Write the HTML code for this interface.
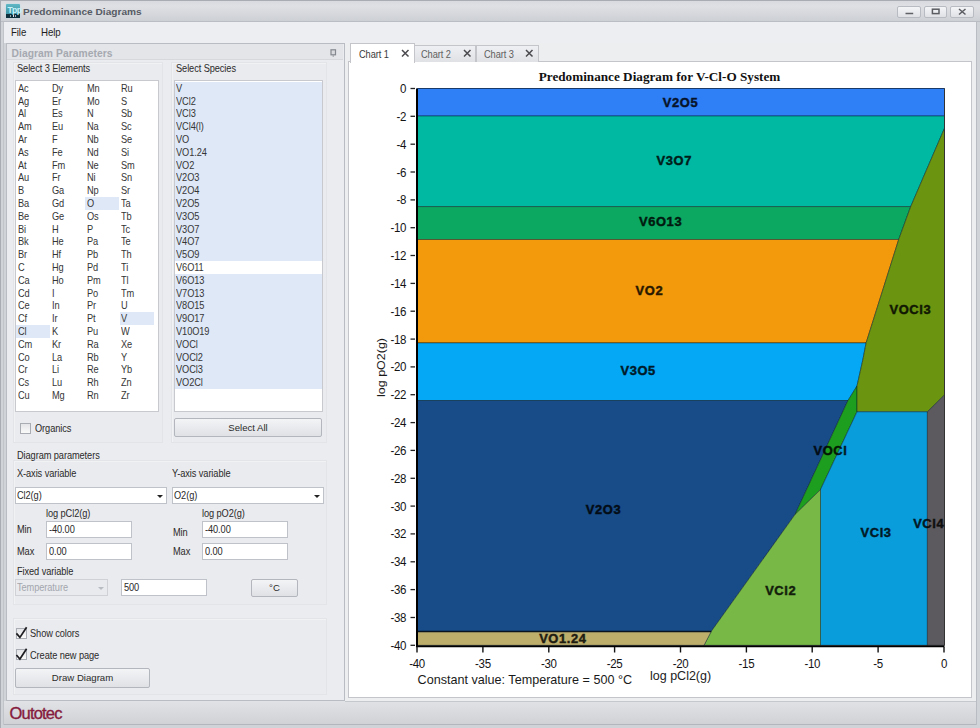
<!DOCTYPE html>
<html><head><meta charset="utf-8">
<style>
*{box-sizing:border-box;margin:0;padding:0}
html,body{width:980px;height:728px;overflow:hidden;background:#e9eaee;font-family:"Liberation Sans",sans-serif;color:#222}
.a{position:absolute}
.t{position:absolute;white-space:nowrap;font-size:10.4px;line-height:12px;color:#2a2a2a;letter-spacing:-0.1px;transform-origin:0 0;transform:scaleX(.89)}
#titlebar{left:0;top:0;width:980px;height:22px;background:linear-gradient(#d9dadf,#dfe0e4 25%,#cdd0d5);border-top:1px solid #a9acb2;border-bottom:1px solid #babdc3}
#menubar{left:3px;top:22px;width:973px;height:21px;background:#eceef1}
.wbtn{position:absolute;top:6px;height:12px;border:1px solid #b9bbc2;border-radius:2px;background:linear-gradient(#f4f5f7,#dfe1e5)}
.panel{left:6px;top:43px;width:339px;height:658px;background:#ebecef;border:1px solid #b9bcc2}
.grp{position:absolute;border:1px solid #e2e4e8;box-shadow:inset 1px 1px 0 #f1f2f4;background:#eaebee}
.lb{position:absolute;background:#fff;border:1px solid #c7c9cf}
.sel{background:#dfe8f7}
.tb{position:absolute;background:#fff;border:1px solid #bfc2c8}
.btn{position:absolute;border:1px solid #b3b6bd;border-radius:2px;background:linear-gradient(#f3f4f6,#dfe1e5);text-align:center;font-size:9.6px;color:#2a2a2a}
.cb{position:absolute;width:11px;height:11px;border:1px solid #a9acb3;background:linear-gradient(#e4e5e8,#fafafa)}
</style></head><body>
<!-- window frame -->
<div class="a" style="left:0;top:0;width:980px;height:728px;background:#d0d3d8"></div>
<div class="a" id="titlebar"></div>
<div class="a" style="left:6px;top:4px;width:14px;height:13.5px;background:linear-gradient(#5fb6c4,#2f8798);border-radius:1px;box-shadow:0 0 1.5px #a8dcea"></div>
<div class="a" style="left:6px;top:13.5px;width:14px;height:4px;background:#0e2f3c"></div>
<div class="t" style="left:7.5px;top:3.5px;font-size:8.5px;color:#c8f2fa;font-weight:bold;letter-spacing:-0.6px;transform:none">Tpp</div>
<div class="a" style="left:10px;top:15px;width:1px;height:1.5px;background:#8aa"></div><div class="a" style="left:12.5px;top:14.5px;width:1.5px;height:2px;background:#dde"></div><div class="a" style="left:15px;top:15px;width:1px;height:1.5px;background:#aab"></div>
<div class="t" style="left:23.3px;top:6.3px;font-weight:bold;font-size:9.6px;color:#565a64;letter-spacing:0;transform:scaleX(1.055)">Predominance Diagrams</div>
<div class="wbtn" style="left:897px;width:24px"></div>
<div class="wbtn" style="left:924px;width:23px"></div>
<div class="wbtn" style="left:950px;width:24px"></div>
<svg class="a" style="left:880px;top:0" width="100" height="22" viewBox="880 0 100 22"><path d="M905.5 13.5 H913.2" stroke="#5f6167" stroke-width="1.5"/><rect x="932.4" y="9.2" width="6.6" height="4.4" fill="none" stroke="#5a5c62" stroke-width="1.5"/><path d="M959 9 L965.5 14.5 M965.5 9 L959 14.5" stroke="#5a5c62" stroke-width="1.5"/></svg>

<div class="a" id="menubar"></div>
<div class="t" style="left:11px;top:27px;font-size:10.2px;transform:scaleX(.95);color:#1e1e1e">File</div>
<div class="t" style="left:41px;top:27px;font-size:10.2px;transform:scaleX(.95);color:#1e1e1e">Help</div>

<!-- left panel -->
<div class="a panel"></div>
<div class="a" style="left:7px;top:44px;width:336px;height:16px;background:#e3e5e9;border-bottom:1px solid #d6d8dc"></div>
<div class="t" style="left:11.5px;top:47.5px;font-weight:bold;color:#a6a9b0;font-size:10.3px;letter-spacing:0.05px;transform:none">Diagram Parameters</div>
<svg class="a" style="left:329px;top:48px" width="10" height="10" viewBox="0 0 10 10"><rect x="2" y="1.8" width="4.5" height="5" fill="#d8dadd" stroke="#85888f" stroke-width="1.2"/><path d="M4.2 7 V9" stroke="#9a9da3" stroke-width="1"/></svg>

<div class="grp" style="left:13px;top:62px;width:150px;height:381px"></div>
<div class="grp" style="left:171px;top:62px;width:156px;height:381px"></div>
<div class="t" style="left:17px;top:63px">Select 3 Elements</div>
<div class="t" style="left:176px;top:63px">Select Species</div>

<div class="lb" style="left:15px;top:80px;width:144px;height:332px"></div>
<div class="lb" style="left:174px;top:80px;width:149px;height:332px"></div>

<div class="a sel" style="left:16.0px;top:325.0px;width:34px;height:12.8px"></div>
<div class="a sel" style="left:85.2px;top:197.0px;width:34px;height:12.8px"></div>
<div class="a sel" style="left:119.8px;top:312.2px;width:34px;height:12.8px"></div>
<div class="t" style="left:17.5px;top:82.7px;color:#363636">Ac</div>
<div class="t" style="left:17.5px;top:95.5px;color:#363636">Ag</div>
<div class="t" style="left:17.5px;top:108.3px;color:#363636">Al</div>
<div class="t" style="left:17.5px;top:121.1px;color:#363636">Am</div>
<div class="t" style="left:17.5px;top:133.9px;color:#363636">Ar</div>
<div class="t" style="left:17.5px;top:146.7px;color:#363636">As</div>
<div class="t" style="left:17.5px;top:159.5px;color:#363636">At</div>
<div class="t" style="left:17.5px;top:172.3px;color:#363636">Au</div>
<div class="t" style="left:17.5px;top:185.1px;color:#363636">B</div>
<div class="t" style="left:17.5px;top:197.9px;color:#363636">Ba</div>
<div class="t" style="left:17.5px;top:210.7px;color:#363636">Be</div>
<div class="t" style="left:17.5px;top:223.5px;color:#363636">Bi</div>
<div class="t" style="left:17.5px;top:236.3px;color:#363636">Bk</div>
<div class="t" style="left:17.5px;top:249.1px;color:#363636">Br</div>
<div class="t" style="left:17.5px;top:261.9px;color:#363636">C</div>
<div class="t" style="left:17.5px;top:274.7px;color:#363636">Ca</div>
<div class="t" style="left:17.5px;top:287.5px;color:#363636">Cd</div>
<div class="t" style="left:17.5px;top:300.3px;color:#363636">Ce</div>
<div class="t" style="left:17.5px;top:313.1px;color:#363636">Cf</div>
<div class="t" style="left:17.5px;top:325.9px;color:#363636">Cl</div>
<div class="t" style="left:17.5px;top:338.7px;color:#363636">Cm</div>
<div class="t" style="left:17.5px;top:351.5px;color:#363636">Co</div>
<div class="t" style="left:17.5px;top:364.3px;color:#363636">Cr</div>
<div class="t" style="left:17.5px;top:377.1px;color:#363636">Cs</div>
<div class="t" style="left:17.5px;top:389.9px;color:#363636">Cu</div>
<div class="t" style="left:52.1px;top:82.7px;color:#363636">Dy</div>
<div class="t" style="left:52.1px;top:95.5px;color:#363636">Er</div>
<div class="t" style="left:52.1px;top:108.3px;color:#363636">Es</div>
<div class="t" style="left:52.1px;top:121.1px;color:#363636">Eu</div>
<div class="t" style="left:52.1px;top:133.9px;color:#363636">F</div>
<div class="t" style="left:52.1px;top:146.7px;color:#363636">Fe</div>
<div class="t" style="left:52.1px;top:159.5px;color:#363636">Fm</div>
<div class="t" style="left:52.1px;top:172.3px;color:#363636">Fr</div>
<div class="t" style="left:52.1px;top:185.1px;color:#363636">Ga</div>
<div class="t" style="left:52.1px;top:197.9px;color:#363636">Gd</div>
<div class="t" style="left:52.1px;top:210.7px;color:#363636">Ge</div>
<div class="t" style="left:52.1px;top:223.5px;color:#363636">H</div>
<div class="t" style="left:52.1px;top:236.3px;color:#363636">He</div>
<div class="t" style="left:52.1px;top:249.1px;color:#363636">Hf</div>
<div class="t" style="left:52.1px;top:261.9px;color:#363636">Hg</div>
<div class="t" style="left:52.1px;top:274.7px;color:#363636">Ho</div>
<div class="t" style="left:52.1px;top:287.5px;color:#363636">I</div>
<div class="t" style="left:52.1px;top:300.3px;color:#363636">In</div>
<div class="t" style="left:52.1px;top:313.1px;color:#363636">Ir</div>
<div class="t" style="left:52.1px;top:325.9px;color:#363636">K</div>
<div class="t" style="left:52.1px;top:338.7px;color:#363636">Kr</div>
<div class="t" style="left:52.1px;top:351.5px;color:#363636">La</div>
<div class="t" style="left:52.1px;top:364.3px;color:#363636">Li</div>
<div class="t" style="left:52.1px;top:377.1px;color:#363636">Lu</div>
<div class="t" style="left:52.1px;top:389.9px;color:#363636">Mg</div>
<div class="t" style="left:86.7px;top:82.7px;color:#363636">Mn</div>
<div class="t" style="left:86.7px;top:95.5px;color:#363636">Mo</div>
<div class="t" style="left:86.7px;top:108.3px;color:#363636">N</div>
<div class="t" style="left:86.7px;top:121.1px;color:#363636">Na</div>
<div class="t" style="left:86.7px;top:133.9px;color:#363636">Nb</div>
<div class="t" style="left:86.7px;top:146.7px;color:#363636">Nd</div>
<div class="t" style="left:86.7px;top:159.5px;color:#363636">Ne</div>
<div class="t" style="left:86.7px;top:172.3px;color:#363636">Ni</div>
<div class="t" style="left:86.7px;top:185.1px;color:#363636">Np</div>
<div class="t" style="left:86.7px;top:197.9px;color:#363636">O</div>
<div class="t" style="left:86.7px;top:210.7px;color:#363636">Os</div>
<div class="t" style="left:86.7px;top:223.5px;color:#363636">P</div>
<div class="t" style="left:86.7px;top:236.3px;color:#363636">Pa</div>
<div class="t" style="left:86.7px;top:249.1px;color:#363636">Pb</div>
<div class="t" style="left:86.7px;top:261.9px;color:#363636">Pd</div>
<div class="t" style="left:86.7px;top:274.7px;color:#363636">Pm</div>
<div class="t" style="left:86.7px;top:287.5px;color:#363636">Po</div>
<div class="t" style="left:86.7px;top:300.3px;color:#363636">Pr</div>
<div class="t" style="left:86.7px;top:313.1px;color:#363636">Pt</div>
<div class="t" style="left:86.7px;top:325.9px;color:#363636">Pu</div>
<div class="t" style="left:86.7px;top:338.7px;color:#363636">Ra</div>
<div class="t" style="left:86.7px;top:351.5px;color:#363636">Rb</div>
<div class="t" style="left:86.7px;top:364.3px;color:#363636">Re</div>
<div class="t" style="left:86.7px;top:377.1px;color:#363636">Rh</div>
<div class="t" style="left:86.7px;top:389.9px;color:#363636">Rn</div>
<div class="t" style="left:121.3px;top:82.7px;color:#363636">Ru</div>
<div class="t" style="left:121.3px;top:95.5px;color:#363636">S</div>
<div class="t" style="left:121.3px;top:108.3px;color:#363636">Sb</div>
<div class="t" style="left:121.3px;top:121.1px;color:#363636">Sc</div>
<div class="t" style="left:121.3px;top:133.9px;color:#363636">Se</div>
<div class="t" style="left:121.3px;top:146.7px;color:#363636">Si</div>
<div class="t" style="left:121.3px;top:159.5px;color:#363636">Sm</div>
<div class="t" style="left:121.3px;top:172.3px;color:#363636">Sn</div>
<div class="t" style="left:121.3px;top:185.1px;color:#363636">Sr</div>
<div class="t" style="left:121.3px;top:197.9px;color:#363636">Ta</div>
<div class="t" style="left:121.3px;top:210.7px;color:#363636">Tb</div>
<div class="t" style="left:121.3px;top:223.5px;color:#363636">Tc</div>
<div class="t" style="left:121.3px;top:236.3px;color:#363636">Te</div>
<div class="t" style="left:121.3px;top:249.1px;color:#363636">Th</div>
<div class="t" style="left:121.3px;top:261.9px;color:#363636">Ti</div>
<div class="t" style="left:121.3px;top:274.7px;color:#363636">Tl</div>
<div class="t" style="left:121.3px;top:287.5px;color:#363636">Tm</div>
<div class="t" style="left:121.3px;top:300.3px;color:#363636">U</div>
<div class="t" style="left:121.3px;top:313.1px;color:#363636">V</div>
<div class="t" style="left:121.3px;top:325.9px;color:#363636">W</div>
<div class="t" style="left:121.3px;top:338.7px;color:#363636">Xe</div>
<div class="t" style="left:121.3px;top:351.5px;color:#363636">Y</div>
<div class="t" style="left:121.3px;top:364.3px;color:#363636">Yb</div>
<div class="t" style="left:121.3px;top:377.1px;color:#363636">Zn</div>
<div class="t" style="left:121.3px;top:389.9px;color:#363636">Zr</div>
<div class="a sel" style="left:175px;top:81.8px;width:147px;height:179.2px"></div>
<div class="a sel" style="left:175px;top:273.8px;width:147px;height:115.2px"></div>
<div class="t" style="left:176px;top:82.7px;color:#363636">V</div>
<div class="t" style="left:176px;top:95.5px;color:#363636">VCl2</div>
<div class="t" style="left:176px;top:108.3px;color:#363636">VCl3</div>
<div class="t" style="left:176px;top:121.1px;color:#363636">VCl4(l)</div>
<div class="t" style="left:176px;top:133.9px;color:#363636">VO</div>
<div class="t" style="left:176px;top:146.7px;color:#363636">VO1.24</div>
<div class="t" style="left:176px;top:159.5px;color:#363636">VO2</div>
<div class="t" style="left:176px;top:172.3px;color:#363636">V2O3</div>
<div class="t" style="left:176px;top:185.1px;color:#363636">V2O4</div>
<div class="t" style="left:176px;top:197.9px;color:#363636">V2O5</div>
<div class="t" style="left:176px;top:210.7px;color:#363636">V3O5</div>
<div class="t" style="left:176px;top:223.5px;color:#363636">V3O7</div>
<div class="t" style="left:176px;top:236.3px;color:#363636">V4O7</div>
<div class="t" style="left:176px;top:249.1px;color:#363636">V5O9</div>
<div class="t" style="left:176px;top:261.9px;color:#363636">V6O11</div>
<div class="t" style="left:176px;top:274.7px;color:#363636">V6O13</div>
<div class="t" style="left:176px;top:287.5px;color:#363636">V7O13</div>
<div class="t" style="left:176px;top:300.3px;color:#363636">V8O15</div>
<div class="t" style="left:176px;top:313.1px;color:#363636">V9O17</div>
<div class="t" style="left:176px;top:325.9px;color:#363636">V10O19</div>
<div class="t" style="left:176px;top:338.7px;color:#363636">VOCl</div>
<div class="t" style="left:176px;top:351.5px;color:#363636">VOCl2</div>
<div class="t" style="left:176px;top:364.3px;color:#363636">VOCl3</div>
<div class="t" style="left:176px;top:377.1px;color:#363636">VO2Cl</div>

<div class="cb" style="left:20px;top:423px"></div>
<div class="t" style="left:35px;top:423px">Organics</div>
<div class="btn" style="left:174px;top:418px;width:148px;height:19px;line-height:17px">Select All</div>

<!-- diagram params -->
<div class="grp" style="left:13px;top:460px;width:314px;height:145px"></div>
<div class="t" style="left:17px;top:450px">Diagram parameters</div>
<div class="t" style="left:17px;top:468px">X-axis variable</div>
<div class="t" style="left:172px;top:468px">Y-axis variable</div>
<div class="tb" style="left:15px;top:487px;width:152px;height:17px"></div>
<div class="t" style="left:17px;top:490px">Cl2(g)</div>
<div class="a" style="left:157px;top:495px;width:0;height:0;border-left:3px solid transparent;border-right:3px solid transparent;border-top:3px solid #222"></div>
<div class="tb" style="left:172px;top:487px;width:152px;height:17px"></div>
<div class="t" style="left:174px;top:490px">O2(g)</div>
<div class="a" style="left:314px;top:495px;width:0;height:0;border-left:3px solid transparent;border-right:3px solid transparent;border-top:3px solid #222"></div>

<div class="t" style="left:46px;top:508px">log pCl2(g)</div>
<div class="t" style="left:202px;top:508px">log pO2(g)</div>
<div class="t" style="left:17px;top:524px">Min</div>
<div class="t" style="left:17px;top:546px">Max</div>
<div class="t" style="left:173px;top:527px">Min</div>
<div class="t" style="left:173px;top:546px">Max</div>
<div class="tb" style="left:46px;top:521px;width:86px;height:17px"></div>
<div class="t" style="left:49px;top:524px">-40.00</div>
<div class="tb" style="left:46px;top:543px;width:86px;height:17px"></div>
<div class="t" style="left:49px;top:546px">0.00</div>
<div class="tb" style="left:202px;top:521px;width:86px;height:17px"></div>
<div class="t" style="left:205px;top:524px">-40.00</div>
<div class="tb" style="left:202px;top:543px;width:86px;height:17px"></div>
<div class="t" style="left:205px;top:546px">0.00</div>

<div class="t" style="left:17px;top:566px">Fixed variable</div>
<div class="a" style="left:15px;top:579px;width:93px;height:17px;border:1px solid #cfd1d6;background:#e9eaee"></div>
<div class="t" style="left:17px;top:582px;color:#a3a6ad">Temperature</div>
<div class="a" style="left:98px;top:587px;width:0;height:0;border-left:3px solid transparent;border-right:3px solid transparent;border-top:3px solid #b8bbc1"></div>
<div class="tb" style="left:121px;top:579px;width:86px;height:17px"></div>
<div class="t" style="left:124px;top:582px">500</div>
<div class="btn" style="left:251px;top:579px;width:47px;height:18px;line-height:16px">°C</div>

<div class="grp" style="left:13px;top:618px;width:314px;height:77px"></div>
<div class="cb" style="left:15.5px;top:627.5px"></div>
<div class="t" style="left:29.5px;top:628px">Show colors</div>
<div class="cb" style="left:15.5px;top:649px"></div>
<div class="t" style="left:29.5px;top:650px">Create new page</div>
<svg class="a" style="left:0;top:0" width="40" height="700" viewBox="0 0 40 700"><path d="M16.4 633.4 L19.9 637.4 L26.6 627.2" fill="none" stroke="#1e1e22" stroke-width="1.7" stroke-linejoin="miter"/><path d="M16.4 655 L19.9 659 L26.6 648.8" fill="none" stroke="#1e1e22" stroke-width="1.7"/></svg>
<div class="btn" style="left:15px;top:668px;width:135px;height:20px;line-height:18px">Draw Diagram</div>

<!-- status bar -->
<div class="a" style="left:3px;top:701px;width:974px;height:24px;background:linear-gradient(#e0e2e5,#d0d2d6);border-bottom:1px solid #b3b6bc"></div>
<div class="a" style="left:976px;top:22px;width:1px;height:703px;background:#b9bcc2"></div>
<div class="a" style="left:0;top:0;width:1px;height:728px;background:#a9acb3"></div><div class="a" style="left:3px;top:22px;width:1px;height:703px;background:#c1c4c9"></div>
<div class="t" style="left:9.5px;top:704px;font-size:16.5px;line-height:18px;color:#851a3c;letter-spacing:-0.8px;transform:none;-webkit-text-stroke:0.35px #851a3c">Outotec</div>

<!-- chart area -->
<div class="a" style="left:345px;top:43px;width:631px;height:658px;background:#eceef0"></div>
<div class="a" style="left:345px;top:701px;width:631px;height:1px;background:#c5c8cd"></div>
<div class="a" style="left:348px;top:61px;width:624px;height:637px;background:#fff;border:1px solid #c3c5cb"></div>
<div class="a" style="left:414px;top:45px;width:62px;height:17px;background:linear-gradient(#eff0f3,#dfe1e5);border:1px solid #c3c5cb;border-bottom:none"></div>
<div class="a" style="left:476px;top:45px;width:63px;height:17px;background:linear-gradient(#eff0f3,#dfe1e5);border:1px solid #c3c5cb;border-bottom:none"></div>
<div class="a" style="left:350px;top:43px;width:65px;height:20px;background:#fff;border:1px solid #c3c5cb;border-bottom:none"></div>
<div class="t" style="left:358.5px;top:49px;color:#3a3a3a">Chart 1</div>
<svg class="a" style="left:401px;top:49px" width="9" height="9" viewBox="0 0 9 9"><path d="M1 1 L7.5 7.5 M7.5 1 L1 7.5" stroke="#4a4a4e" stroke-width="1.5"/></svg>
<div class="t" style="left:421px;top:49px;color:#606060">Chart 2</div>
<svg class="a" style="left:463px;top:49px" width="9" height="9" viewBox="0 0 9 9"><path d="M1 1 L7.5 7.5 M7.5 1 L1 7.5" stroke="#4a4a4e" stroke-width="1.5"/></svg>
<div class="t" style="left:483.5px;top:49px;color:#606060">Chart 3</div>
<svg class="a" style="left:525px;top:49px" width="9" height="9" viewBox="0 0 9 9"><path d="M1 1 L7.5 7.5 M7.5 1 L1 7.5" stroke="#4a4a4e" stroke-width="1.5"/></svg>
<svg class="a" style="left:0;top:0" width="980" height="728" viewBox="0 0 980 728">
<text x="659.5" y="80.7" text-anchor="middle" font-family="Liberation Serif" font-weight="bold" font-size="13.2" fill="#111">Predominance Diagram for V-Cl-O System</text>
<polygon points="417.0,88.5 944.5,88.5 944.5,116.0 417.0,116.0" fill="#2f7ff7" stroke="rgba(0,25,35,0.45)" stroke-width="1"/>
<polygon points="417.0,116.0 944.5,116.0 944.5,128.2 910.7,206.6 417.0,206.6" fill="#00b9a3" stroke="rgba(0,25,35,0.45)" stroke-width="1"/>
<polygon points="417.0,206.6 910.7,206.6 898.7,239.5 417.0,239.5" fill="#0ca862" stroke="rgba(0,25,35,0.45)" stroke-width="1"/>
<polygon points="417.0,239.5 898.7,239.5 866.1,342.9 417.0,342.9" fill="#f39a0c" stroke="rgba(0,25,35,0.45)" stroke-width="1"/>
<polygon points="417.0,342.9 866.1,342.9 862.8,360.0 857.0,386.0 848.0,400.5 417.0,400.5" fill="#04a8f4" stroke="rgba(0,25,35,0.45)" stroke-width="1"/>
<polygon points="417.0,400.5 848.0,400.5 795.0,514.6 711.2,631.5 417.0,631.5" fill="#174c88" stroke="rgba(0,25,35,0.45)" stroke-width="1"/>
<polygon points="857.0,386.0 857.0,411.8 820.5,489.6 795.0,514.6 848.0,400.5" fill="#1e9e1e" stroke="rgba(0,25,35,0.45)" stroke-width="1"/>
<polygon points="944.5,128.2 944.5,395.0 927.4,411.8 857.0,411.8 857.0,386.0 862.8,360.0 866.1,342.9 898.7,239.5 910.7,206.6" fill="#6b9411" stroke="rgba(0,25,35,0.45)" stroke-width="1"/>
<polygon points="857.0,411.8 927.4,411.8 927.4,645.3 820.5,645.3 820.5,489.6" fill="#0a9ddc" stroke="rgba(0,25,35,0.45)" stroke-width="1"/>
<polygon points="927.4,411.8 944.5,395.0 944.5,645.3 927.4,645.3" fill="#5c5a5e" stroke="rgba(0,25,35,0.45)" stroke-width="1"/>
<polygon points="820.5,489.6 820.5,645.3 704.0,645.3 711.2,631.5 795.0,514.6" fill="#78b846" stroke="rgba(0,25,35,0.45)" stroke-width="1"/>
<polygon points="417.0,631.5 711.2,631.5 704.0,645.3 417.0,645.3" fill="#bdae6c" stroke="rgba(0,25,35,0.45)" stroke-width="1"/>
<line x1="417" y1="631.5" x2="711.2" y2="631.5" stroke="#0a1420" stroke-width="1.6"/>
<line x1="417" y1="88.5" x2="417" y2="646.3" stroke="#000" stroke-width="2"/>
<line x1="416" y1="646.3" x2="944.5" y2="646.3" stroke="#000" stroke-width="2"/>
<line x1="417" y1="88.5" x2="944.5" y2="88.5" stroke="#1a3a6a" stroke-width="1"/>
<line x1="944.5" y1="88.5" x2="944.5" y2="645.3" stroke="#333" stroke-width="1"/>
<line x1="410.5" y1="88.5" x2="415" y2="88.5" stroke="#222" stroke-width="1.3"/>
<text transform="translate(406,93.0) scale(0.9,1)" text-anchor="end" font-family="Liberation Sans" font-size="12.8" fill="#141414" letter-spacing="-0.4">0</text>
<line x1="410.5" y1="116.3" x2="415" y2="116.3" stroke="#222" stroke-width="1.3"/>
<text transform="translate(406,120.8) scale(0.9,1)" text-anchor="end" font-family="Liberation Sans" font-size="12.8" fill="#141414" letter-spacing="-0.4">-2</text>
<line x1="410.5" y1="144.2" x2="415" y2="144.2" stroke="#222" stroke-width="1.3"/>
<text transform="translate(406,148.7) scale(0.9,1)" text-anchor="end" font-family="Liberation Sans" font-size="12.8" fill="#141414" letter-spacing="-0.4">-4</text>
<line x1="410.5" y1="172.0" x2="415" y2="172.0" stroke="#222" stroke-width="1.3"/>
<text transform="translate(406,176.5) scale(0.9,1)" text-anchor="end" font-family="Liberation Sans" font-size="12.8" fill="#141414" letter-spacing="-0.4">-6</text>
<line x1="410.5" y1="199.9" x2="415" y2="199.9" stroke="#222" stroke-width="1.3"/>
<text transform="translate(406,204.4) scale(0.9,1)" text-anchor="end" font-family="Liberation Sans" font-size="12.8" fill="#141414" letter-spacing="-0.4">-8</text>
<line x1="410.5" y1="227.7" x2="415" y2="227.7" stroke="#222" stroke-width="1.3"/>
<text transform="translate(406,232.2) scale(0.9,1)" text-anchor="end" font-family="Liberation Sans" font-size="12.8" fill="#141414" letter-spacing="-0.4">-10</text>
<line x1="410.5" y1="255.5" x2="415" y2="255.5" stroke="#222" stroke-width="1.3"/>
<text transform="translate(406,260.0) scale(0.9,1)" text-anchor="end" font-family="Liberation Sans" font-size="12.8" fill="#141414" letter-spacing="-0.4">-12</text>
<line x1="410.5" y1="283.4" x2="415" y2="283.4" stroke="#222" stroke-width="1.3"/>
<text transform="translate(406,287.9) scale(0.9,1)" text-anchor="end" font-family="Liberation Sans" font-size="12.8" fill="#141414" letter-spacing="-0.4">-14</text>
<line x1="410.5" y1="311.2" x2="415" y2="311.2" stroke="#222" stroke-width="1.3"/>
<text transform="translate(406,315.7) scale(0.9,1)" text-anchor="end" font-family="Liberation Sans" font-size="12.8" fill="#141414" letter-spacing="-0.4">-16</text>
<line x1="410.5" y1="339.1" x2="415" y2="339.1" stroke="#222" stroke-width="1.3"/>
<text transform="translate(406,343.6) scale(0.9,1)" text-anchor="end" font-family="Liberation Sans" font-size="12.8" fill="#141414" letter-spacing="-0.4">-18</text>
<line x1="410.5" y1="366.9" x2="415" y2="366.9" stroke="#222" stroke-width="1.3"/>
<text transform="translate(406,371.4) scale(0.9,1)" text-anchor="end" font-family="Liberation Sans" font-size="12.8" fill="#141414" letter-spacing="-0.4">-20</text>
<line x1="410.5" y1="394.7" x2="415" y2="394.7" stroke="#222" stroke-width="1.3"/>
<text transform="translate(406,399.2) scale(0.9,1)" text-anchor="end" font-family="Liberation Sans" font-size="12.8" fill="#141414" letter-spacing="-0.4">-22</text>
<line x1="410.5" y1="422.6" x2="415" y2="422.6" stroke="#222" stroke-width="1.3"/>
<text transform="translate(406,427.1) scale(0.9,1)" text-anchor="end" font-family="Liberation Sans" font-size="12.8" fill="#141414" letter-spacing="-0.4">-24</text>
<line x1="410.5" y1="450.4" x2="415" y2="450.4" stroke="#222" stroke-width="1.3"/>
<text transform="translate(406,454.9) scale(0.9,1)" text-anchor="end" font-family="Liberation Sans" font-size="12.8" fill="#141414" letter-spacing="-0.4">-26</text>
<line x1="410.5" y1="478.3" x2="415" y2="478.3" stroke="#222" stroke-width="1.3"/>
<text transform="translate(406,482.8) scale(0.9,1)" text-anchor="end" font-family="Liberation Sans" font-size="12.8" fill="#141414" letter-spacing="-0.4">-28</text>
<line x1="410.5" y1="506.1" x2="415" y2="506.1" stroke="#222" stroke-width="1.3"/>
<text transform="translate(406,510.6) scale(0.9,1)" text-anchor="end" font-family="Liberation Sans" font-size="12.8" fill="#141414" letter-spacing="-0.4">-30</text>
<line x1="410.5" y1="533.9" x2="415" y2="533.9" stroke="#222" stroke-width="1.3"/>
<text transform="translate(406,538.4) scale(0.9,1)" text-anchor="end" font-family="Liberation Sans" font-size="12.8" fill="#141414" letter-spacing="-0.4">-32</text>
<line x1="410.5" y1="561.8" x2="415" y2="561.8" stroke="#222" stroke-width="1.3"/>
<text transform="translate(406,566.3) scale(0.9,1)" text-anchor="end" font-family="Liberation Sans" font-size="12.8" fill="#141414" letter-spacing="-0.4">-34</text>
<line x1="410.5" y1="589.6" x2="415" y2="589.6" stroke="#222" stroke-width="1.3"/>
<text transform="translate(406,594.1) scale(0.9,1)" text-anchor="end" font-family="Liberation Sans" font-size="12.8" fill="#141414" letter-spacing="-0.4">-36</text>
<line x1="410.5" y1="617.5" x2="415" y2="617.5" stroke="#222" stroke-width="1.3"/>
<text transform="translate(406,622.0) scale(0.9,1)" text-anchor="end" font-family="Liberation Sans" font-size="12.8" fill="#141414" letter-spacing="-0.4">-38</text>
<line x1="410.5" y1="645.3" x2="415" y2="645.3" stroke="#222" stroke-width="1.3"/>
<text transform="translate(406,649.8) scale(0.9,1)" text-anchor="end" font-family="Liberation Sans" font-size="12.8" fill="#141414" letter-spacing="-0.4">-40</text>
<line x1="417.0" y1="647" x2="417.0" y2="652.5" stroke="#111" stroke-width="1.4"/>
<text transform="translate(417.0,668.2) scale(0.9,1)" text-anchor="middle" font-family="Liberation Sans" font-size="12.8" fill="#141414" letter-spacing="-0.4">-40</text>
<line x1="482.9" y1="647" x2="482.9" y2="652.5" stroke="#111" stroke-width="1.4"/>
<text transform="translate(482.9,668.2) scale(0.9,1)" text-anchor="middle" font-family="Liberation Sans" font-size="12.8" fill="#141414" letter-spacing="-0.4">-35</text>
<line x1="548.8" y1="647" x2="548.8" y2="652.5" stroke="#111" stroke-width="1.4"/>
<text transform="translate(548.8,668.2) scale(0.9,1)" text-anchor="middle" font-family="Liberation Sans" font-size="12.8" fill="#141414" letter-spacing="-0.4">-30</text>
<line x1="614.6" y1="647" x2="614.6" y2="652.5" stroke="#111" stroke-width="1.4"/>
<text transform="translate(614.6,668.2) scale(0.9,1)" text-anchor="middle" font-family="Liberation Sans" font-size="12.8" fill="#141414" letter-spacing="-0.4">-25</text>
<line x1="680.5" y1="647" x2="680.5" y2="652.5" stroke="#111" stroke-width="1.4"/>
<text transform="translate(680.5,668.2) scale(0.9,1)" text-anchor="middle" font-family="Liberation Sans" font-size="12.8" fill="#141414" letter-spacing="-0.4">-20</text>
<line x1="746.4" y1="647" x2="746.4" y2="652.5" stroke="#111" stroke-width="1.4"/>
<text transform="translate(746.4,668.2) scale(0.9,1)" text-anchor="middle" font-family="Liberation Sans" font-size="12.8" fill="#141414" letter-spacing="-0.4">-15</text>
<line x1="812.2" y1="647" x2="812.2" y2="652.5" stroke="#111" stroke-width="1.4"/>
<text transform="translate(812.2,668.2) scale(0.9,1)" text-anchor="middle" font-family="Liberation Sans" font-size="12.8" fill="#141414" letter-spacing="-0.4">-10</text>
<line x1="878.1" y1="647" x2="878.1" y2="652.5" stroke="#111" stroke-width="1.4"/>
<text transform="translate(878.1,668.2) scale(0.9,1)" text-anchor="middle" font-family="Liberation Sans" font-size="12.8" fill="#141414" letter-spacing="-0.4">-5</text>
<line x1="944.0" y1="647" x2="944.0" y2="652.5" stroke="#111" stroke-width="1.4"/>
<text transform="translate(944.0,668.2) scale(0.9,1)" text-anchor="middle" font-family="Liberation Sans" font-size="12.8" fill="#141414" letter-spacing="-0.4">0</text>
<text transform="translate(417.6,684) scale(0.955,1)" font-family="Liberation Sans" font-size="13.2" fill="#1a1a1a">Constant value: Temperature = 500 °C</text>
<text x="650" y="679.5" font-family="Liberation Sans" font-size="12.5" fill="#222">log pCl2(g)</text>
<text transform="translate(385,397) rotate(-90) scale(1,0.88)" x="0" y="0" font-family="Liberation Sans" font-size="12.5" fill="#1a1a1a">log pO2(g)</text>
<g opacity="0.84">
<text x="680.5" y="107.2" text-anchor="middle" font-family="Liberation Sans" font-weight="bold" font-size="12.9" letter-spacing="0.6" fill="#000" stroke="#000" stroke-width="0.45">V2O5</text>
<text x="674.3" y="165.0" text-anchor="middle" font-family="Liberation Sans" font-weight="bold" font-size="12.9" letter-spacing="0.6" fill="#000" stroke="#000" stroke-width="0.45">V3O7</text>
<text x="660.6" y="226.2" text-anchor="middle" font-family="Liberation Sans" font-weight="bold" font-size="12.9" letter-spacing="0.6" fill="#000" stroke="#000" stroke-width="0.45">V6O13</text>
<text x="649.4" y="294.5" text-anchor="middle" font-family="Liberation Sans" font-weight="bold" font-size="12.9" letter-spacing="0.6" fill="#000" stroke="#000" stroke-width="0.45">VO2</text>
<text x="638.2" y="375.4" text-anchor="middle" font-family="Liberation Sans" font-weight="bold" font-size="12.9" letter-spacing="0.6" fill="#000" stroke="#000" stroke-width="0.45">V3O5</text>
<text x="603.5" y="513.6" text-anchor="middle" font-family="Liberation Sans" font-weight="bold" font-size="12.9" letter-spacing="0.6" fill="#000" stroke="#000" stroke-width="0.45">V2O3</text>
<text x="562.8" y="642.7" text-anchor="middle" font-family="Liberation Sans" font-weight="bold" font-size="12.9" letter-spacing="0.6" fill="#000" stroke="#000" stroke-width="0.45">VO1.24</text>
<text x="910.4" y="314.0" text-anchor="middle" font-family="Liberation Sans" font-weight="bold" font-size="12.9" letter-spacing="0.6" fill="#000" stroke="#000" stroke-width="0.45">VOCl3</text>
<text x="830.4" y="454.8" text-anchor="middle" font-family="Liberation Sans" font-weight="bold" font-size="12.9" letter-spacing="0.6" fill="#000" stroke="#000" stroke-width="0.45">VOCl</text>
<text x="780.7" y="595.1" text-anchor="middle" font-family="Liberation Sans" font-weight="bold" font-size="12.9" letter-spacing="0.6" fill="#000" stroke="#000" stroke-width="0.45">VCl2</text>
<text x="876.1" y="537.4" text-anchor="middle" font-family="Liberation Sans" font-weight="bold" font-size="12.9" letter-spacing="0.6" fill="#000" stroke="#000" stroke-width="0.45">VCl3</text>
<text x="928.7" y="528.3" text-anchor="middle" font-family="Liberation Sans" font-weight="bold" font-size="12.9" letter-spacing="0.6" fill="#000" stroke="#000" stroke-width="0.45">VCl4</text>
</g>
</svg>
</body></html>
